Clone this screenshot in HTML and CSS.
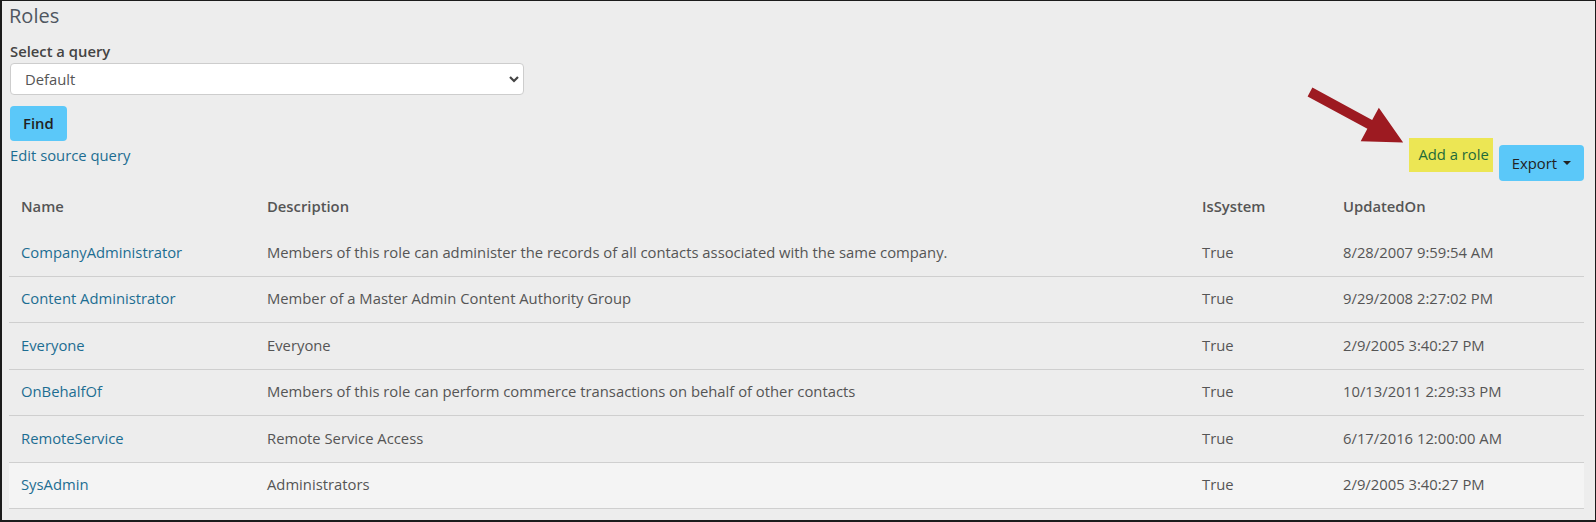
FILE: index.html
```html
<!DOCTYPE html>
<html lang="en">
<head>
    <meta charset="UTF-8">
    <meta name="viewport" content="width=device-width, initial-scale=1.0">
    <title>Roles</title>
    <link rel="stylesheet" href="styles.css">
</head>
<body>
    <div class="page">
        <h1 class="page-title">Roles</h1>

        <div class="top-bar">
            <!-- query picker -->
            <form class="query-form" onsubmit="return false">
                <label for="query" class="field-label">Select a query</label>
                <div class="select-wrap">
                    <select id="query" class="query-select">
                        <option>Default</option>
                    </select>
                    <svg class="select-caret" width="10" height="8" viewBox="0 0 10 8">
                        <path d="M1 2 L5 6 L9 2" fill="none" stroke="#444" stroke-width="2.2"/>
                    </svg>
                </div>
                <button type="submit" class="btn btn-find">Find</button>
                <a href="#" class="edit-link">Edit source query</a>
            </form>

            <div class="actions">
                <a href="#" class="add-role">Add a role</a>
                <button type="button" class="btn btn-export">Export<span class="caret"></span></button>
            </div>
        </div>

        <table class="roles-table">
            <colgroup>
                <col style="width: 246px">
                <col style="width: 935px">
                <col style="width: 141px">
                <col style="width: 253px">
            </colgroup>
            <thead>
                <tr>
                    <th>Name</th>
                    <th>Description</th>
                    <th>IsSystem</th>
                    <th>UpdatedOn</th>
                </tr>
            </thead>
            <tbody>
                <tr>
                    <td><a href="#">CompanyAdministrator</a></td>
                    <td>Members of this role can administer the records of all contacts associated with the same company.</td>
                    <td>True</td>
                    <td>8/28/2007 9:59:54 AM</td>
                </tr>
                <tr>
                    <td><a href="#">Content Administrator</a></td>
                    <td>Member of a Master Admin Content Authority Group</td>
                    <td>True</td>
                    <td>9/29/2008 2:27:02 PM</td>
                </tr>
                <tr>
                    <td><a href="#">Everyone</a></td>
                    <td>Everyone</td>
                    <td>True</td>
                    <td>2/9/2005 3:40:27 PM</td>
                </tr>
                <tr>
                    <td><a href="#">OnBehalfOf</a></td>
                    <td>Members of this role can perform commerce transactions on behalf of other contacts</td>
                    <td>True</td>
                    <td>10/13/2011 2:29:33 PM</td>
                </tr>
                <tr>
                    <td><a href="#">RemoteService</a></td>
                    <td>Remote Service Access</td>
                    <td>True</td>
                    <td>6/17/2016 12:00:00 AM</td>
                </tr>
                <tr class="row-hover">
                    <td><a href="#">SysAdmin</a></td>
                    <td>Administrators</td>
                    <td>True</td>
                    <td>2/9/2005 3:40:27 PM</td>
                </tr>
            </tbody>
        </table>

        <!-- pointer to the add button -->
        <svg class="callout-arrow" width="110" height="70" viewBox="0 0 110 70">
            <polygon transform="translate(10,12) rotate(28.5)"
                     points="0,-5 68,-5 68,-19 106,0 68,19 68,5 0,5"
                     fill="#9d1a21"/>
        </svg>
    </div>
</body>
</html>
```

FILE: styles.css
```css
/* page */
html, body {
    margin: 0;
    height: 100%;
}
body {
    font-family: "Open Sans", "Liberation Sans", Arial, sans-serif;
    font-size: 14.8px;
    line-height: 20px;
    color: #555;
    background: #ededed;
}
a {
    color: #1d6d92;
    text-decoration: none;
}
.page {
    position: relative;
    box-sizing: border-box;
    height: 100vh;
    padding: 4px 11px 0 7px;
    border-style: solid;
    border-color: #1b1b1b;
    border-width: 1px 1px 2px 2px;
    background: #ededed;
}
.page-title {
    margin: 0 0 14px;
    font-size: 20px;
    line-height: 22px;
    font-weight: 400;
    color: #4f5660;
}

/* query form + actions */
.top-bar {
    display: flex;
    justify-content: space-between;
    align-items: flex-end;
}
.query-form {
    padding: 0 0 16px 1px;
}
.field-label {
    display: block;
    margin-bottom: 2px;
    font-weight: 600;
    color: #444;
}
.select-wrap {
    position: relative;
    width: 514px;
    margin-bottom: 11px;
}
.query-select {
    display: block;
    width: 100%;
    height: 32px;
    padding: 0 30px 0 14px;
    border: 1px solid #cdcdcd;
    border-radius: 4px;
    background: #fff;
    font-family: inherit;
    font-size: 14.8px;
    color: #555;
    -webkit-appearance: none;
    appearance: none;
}
.select-caret {
    position: absolute;
    right: 5px;
    top: 12px;
    pointer-events: none;
}
.btn {
    display: block;
    border: none;
    border-radius: 4px;
    background: #5bc8f9;
    font-family: inherit;
    font-size: 14.8px;
    color: #222;
    cursor: pointer;
}
.btn-find {
    height: 35px;
    padding: 0 13px 1px;
    margin-bottom: 4px;
    font-weight: 600;
}
.edit-link {
    display: block;
}
.actions {
    display: flex;
    align-items: flex-start;
    gap: 6px;
}
.add-role {
    height: 34px;
    line-height: 33px;
    padding: 0 4px 0 9px;
    background: #ece654;
    color: #1e6b3a;
}
.btn-export {
    display: flex;
    align-items: center;
    height: 36px;
    margin-top: 7px;
    padding: 0 13px 1px;
}
.caret {
    display: inline-block;
    margin-left: 6px;
    border-top: 4px solid #222;
    border-left: 4px solid transparent;
    border-right: 4px solid transparent;
}

/* table */
.roles-table {
    width: 100%;
    margin-top: 3px;
    border-collapse: collapse;
    table-layout: fixed;
}
.roles-table th {
    padding: 12px 12px 14px;
    text-align: left;
    font-weight: 600;
    color: #555;
}
.roles-table td {
    padding: 11.5px 12px 14px;
    border-bottom: 1px solid #cfcfcf;
    white-space: nowrap;
}
.roles-table .row-hover td {
    background: #f4f4f4;
}

.callout-arrow {
    position: absolute;
    left: 1298px;
    top: 79px;
}
```
